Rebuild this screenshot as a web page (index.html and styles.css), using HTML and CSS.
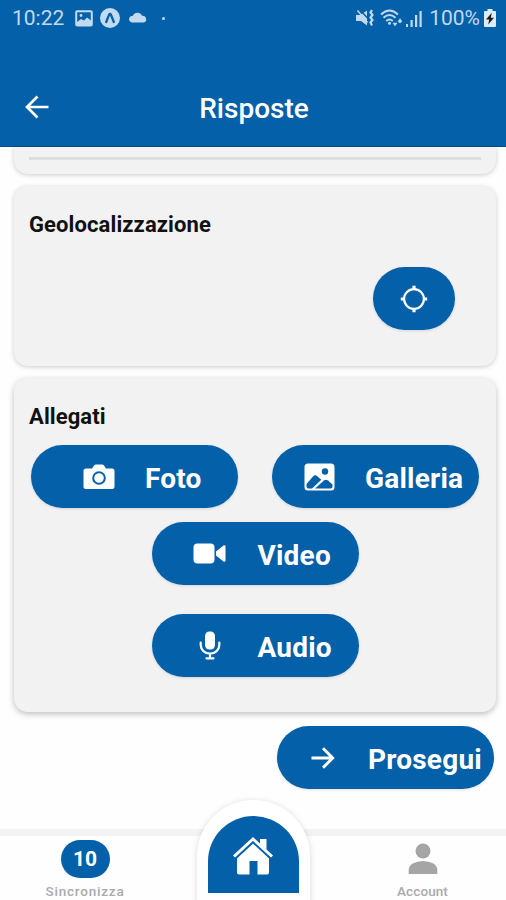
FILE: index.html
```html
<!DOCTYPE html>
<html lang="it">
<head>
  <meta charset="UTF-8">
  <title>Risposte</title>
  <link rel="stylesheet" href="styles.css">
</head>
<body>
  <div class="screen">
    <header class="header">
      <div class="status">
        <span class="clock">10:22</span>
        <svg class="st-photo" width="18" height="17" viewBox="0 0 18 17">
          <rect x="1.2" y="1.2" width="15.6" height="14.4" rx="1" fill="none" stroke="currentColor" stroke-width="2"/>
          <path d="M2 12l4-3 3 1.500 3-3 4 3v5H2z" fill="currentColor"/>
          <circle cx="6" cy="5.5" r="1.4" fill="currentColor"/>
        </svg>
        <svg class="st-app" width="20" height="20" viewBox="0 0 20 20">
          <circle cx="10" cy="10" r="10" fill="currentColor"/>
          <path d="M6.2 14L9 6.8q1-1.6 2 0L13.8 14" fill="none" stroke="#0460a8" stroke-width="2.3" stroke-linecap="round" stroke-linejoin="round"/>
        </svg>
        <svg class="st-cloud" width="19" height="12" viewBox="0 0 19 12">
          <path d="M3.5 11.5a3.3 3.3 0 0 1 0-6.4h1.2A5 5 0 0 1 14 4.8a3.4 3.4 0 0 1 1.5 6.7z" fill="currentColor"/>
        </svg>
        <span class="dot"></span>
        <div class="status-right">
          <svg width="18" height="18" viewBox="0 0 18 18">
            <path d="M0 6h4.500L11 1.500v15L5 12H0z" fill="currentColor"/>
            <path d="M4 1l8 8.500" stroke="#0460a8" stroke-width="1.500"/>
            <path d="M1.500 1.500l10 12" stroke="currentColor" stroke-width="1.500"/>
            <path d="M16 1l-1.500 2.500 2 2.500-2 2.500 2 2.500-2 2.500 1.500 3" fill="none" stroke="currentColor" stroke-width="2.200"/>
          </svg>
          <svg class="st-wifi" width="23" height="18" viewBox="0 0 23 18">
            <path d="M1 5.500q8.500-8 17 0M3.500 8.800q6-5.500 12 0M6.200 12q3.300-3 6.600 0" fill="none" stroke="currentColor" stroke-width="1.900"/>
            <circle cx="9.500" cy="14.200" r="1.500" fill="currentColor"/>
            <path d="M13 14h4l-2 3zM18 12.500l2-3 2 3-2 1.500z" fill="currentColor" stroke="currentColor" stroke-width=".5"/>
          </svg>
          <svg class="st-signal" width="17" height="17" viewBox="0 0 17 17" fill="currentColor">
            <rect x="0" y="14" width="2" height="3"/>
            <rect x="4.500" y="10" width="2.200" height="7"/>
            <rect x="9" y="5" width="2.200" height="12"/>
            <rect x="13.500" y="1" width="2.200" height="16"/>
          </svg>
          <span class="percent">100%</span>
          <svg class="st-battery" width="12" height="18" viewBox="0 0 12 18">
            <path d="M3.500 0h5v2H11q1 0 1 1v14q0 1-1 1H1q-1 0-1-1V3q0-1 1-1h2.500z" fill="#dcebf6"/>
            <path d="M7.800 3.800L2 10.600h3.200L4.200 15.500 10 8.800H6.800z" fill="#1b1b1b"/>
          </svg>
        </div>
      </div>
      <div class="title-bar">
        <svg class="back" width="24" height="24" viewBox="0 0 24 24" fill="none" stroke="#fff" stroke-width="2.700">
          <path d="M23.500 12H2.500M12.500 1.500L2 12l10.500 10.500"/>
        </svg>
        <h1>Risposte</h1>
      </div>
    </header>

    <main class="content">
      <section class="card card-previous">
        <div class="line"></div>
      </section>

      <section class="card card-geo">
        <h2>Geolocalizzazione</h2>
        <button class="btn btn-locate">
          <svg width="28" height="28" viewBox="0 0 28 28" fill="none" stroke="#fff">
            <circle cx="14" cy="14" r="9.900" stroke-width="2.200"/>
            <path d="M14 .8v4M14 23.200v4M.8 14h4M23.200 14h4" stroke-width="3.200"/>
          </svg>
        </button>
      </section>

      <section class="card card-files">
        <h2>Allegati</h2>
        <div class="buttons">
          <button class="btn btn-foto">
            <svg width="32" height="26" viewBox="0 0 32 26">
              <path d="M3 4.500h6L11 1.500q.8-1 2-1h6q1.200 0 2 1l2 3h6q2.500 0 2.500 2.500v15.500q0 2.500-2.500 2.500H3Q.5 25 .5 22.500V7Q.5 4.500 3 4.500z" fill="#fff"/>
              <circle cx="16" cy="14" r="5.800" fill="none" stroke="#0460a8" stroke-width="2"/>
            </svg>
            <span>Foto</span>
          </button>
          <button class="btn btn-galleria">
            <svg width="31" height="28" viewBox="0 0 31 28">
              <rect x=".5" y=".5" width="30" height="27" rx="3.500" fill="#fff"/>
              <g fill="#0460a8">
                <circle cx="21" cy="8.500" r="3.200"/>
                <path d="M2.500 21l6.500-7.500q2-2.300 4.300-.3l4 3.600L8 25.500H4.500q-2 0-2-2z"/>
                <path d="M11 25.500l9-8q2-1.600 4 0l4.500 4v2q0 2-2 2z"/>
              </g>
            </svg>
            <span>Galleria</span>
          </button>
          <button class="btn btn-video">
            <svg width="33" height="21" viewBox="0 0 33 21" fill="#fff">
              <rect x=".5" y=".5" width="21" height="20" rx="4"/>
              <path d="M23 8.500l7.500-6q2-1 2 1v14q0 2-2 1l-7.500-6z"/>
            </svg>
            <span>Video</span>
          </button>
          <button class="btn btn-audio">
            <svg width="22" height="29" viewBox="0 0 22 29">
              <rect x="6" y=".5" width="10" height="18" rx="4.500" fill="#fff"/>
              <path d="M1.700 11.500v2.500a9.300 8.700 0 0 0 18.600 0v-2.500M11 22.700V27M7.500 27.300h7" fill="none" stroke="#fff" stroke-width="2.200" stroke-linecap="round"/>
            </svg>
            <span>Audio</span>
          </button>
        </div>
      </section>

      <button class="btn btn-next">
        <svg width="24" height="22" viewBox="0 0 24 22" fill="none" stroke="#fff" stroke-width="2.900">
          <path d="M.5 11h21.500M12 1.300l9.700 9.700-9.700 9.700"/>
        </svg>
        <span>Prosegui</span>
      </button>
    </main>

    <nav class="tabs">
      <div class="tab">
        <span class="badge">10</span>
        <span class="label">Sincronizza</span>
      </div>
      <div class="tab-home">
        <div class="home">
          <svg width="42" height="40" viewBox="0 0 42 40">
            <path d="M28 3h6.500v14l-6.500-6z" fill="#fff"/>
            <path d="M5 19L21 5.500 37 19v17.500q0 2-2 2h-9.500V25h-8v13.500H7q-2 0-2-2z" fill="#fff"/>
            <path d="M2 22L21 4.500l19 17.500" fill="none" stroke="#0460a8" stroke-width="4.500"/>
            <path d="M2 20.500L21 3l19 17.500" fill="none" stroke="#fff" stroke-width="3"/>
          </svg>
        </div>
      </div>
      <div class="tab tab-account">
        <svg class="user" width="30" height="32" viewBox="0 0 30 32" fill="#a5a5a5">
          <circle cx="15" cy="8" r="7.500"/>
          <path d="M.7 31v-4q0-4 4-6.500Q9 18 15 18t10.300 2.500q4 2.500 4 6.500v4z"/>
        </svg>
        <span class="label label-account">Account</span>
      </div>
    </nav>
  </div>
</body>
</html>
```
FILE: styles.css
```css
* {
  box-sizing: border-box;
}

body {
  margin: 0;
  font-family: Roboto, Arial, sans-serif;
  background: #fefefe;
}

.screen {
  display: flex;
  flex-direction: column;
  height: 900px;
  overflow: hidden;
}

.header {
  flex: none;
  height: 147px;
  background: #0460a8;
  border-bottom: 1px solid #07508e;
}

.status {
  display: flex;
  align-items: center;
  height: 36px;
  padding: 0 10px 0 12px;
  color: #c1daee;
  font-size: 21px;
}

.clock {
  width: 63px;
}

.st-app {
  margin-left: 7px;
}

.st-cloud {
  margin-left: 8px;
  margin-bottom: 3px;
}

.dot {
  width: 3px;
  height: 3px;
  margin-left: 15px;
  border-radius: 50%;
  background: #c1daee;
}

.status-right {
  display: flex;
  align-items: center;
  margin-left: auto;
}

.st-wifi {
  margin-left: 6px;
}

.st-signal {
  margin-left: 3px;
}

.percent {
  margin-left: 6px;
}

.st-battery {
  margin-left: 4px;
}

.title-bar {
  display: grid;
  grid-template-columns: 24px 1fr 24px;
  align-items: center;
  height: 72px;
  margin-top: 35px;
  padding: 0 23px 0 25px;
}

h1 {
  margin: 4px 0 0;
  color: white;
  font-size: 28px;
  font-weight: 500;
  line-height: 32px;
  text-align: center;
}

.content {
  display: flex;
  flex-direction: column;
  flex: 1;
  padding: 0 10px 0 14px;
}

.card {
  width: 482px;
  padding: 25px 15px;
  border-radius: 14px;
  background: #f2f2f2;
  box-shadow: 0 1px 5px rgba(0, 0, 0, 0.2);
}

.card-previous {
  height: 27px;
  padding-top: 10px;
  padding-bottom: 0;
  border-radius: 0 0 14px 14px;
}

.line {
  height: 3px;
  background: #dedede;
}

.card-geo {
  display: flex;
  flex-direction: column;
  height: 180px;
  margin-top: 12px;
}

.card-files {
  height: 334px;
  margin-top: 12px;
  box-shadow: 0 2px 6px rgba(0, 0, 0, 0.26);
}

h2 {
  margin: 0;
  color: #111;
  font-size: 22px;
  font-weight: bold;
  line-height: 27px;
  letter-spacing: 0.1px;
}

.btn {
  display: flex;
  align-items: center;
  height: 63px;
  padding: 0;
  border: none;
  border-radius: 32px;
  background: #0460a8;
  color: white;
  font-family: inherit;
  font-size: 28px;
  font-weight: bold;
  line-height: 34px;
  letter-spacing: 0.2px;
  box-shadow: 0 1px 3px rgba(0, 0, 0, 0.12);
}

.btn span {
  margin-top: 4px;
}

.btn-locate {
  justify-content: center;
  align-self: flex-end;
  width: 82px;
  margin: 29px 26px 0 0;
}

.buttons {
  display: grid;
  grid-template-columns: 207px 207px;
  column-gap: 34px;
  padding: 15px 2px 0;
}

.btn-foto {
  padding-left: 52px;
  gap: 30px;
}

.btn-galleria {
  padding-left: 32px;
  gap: 30px;
}

.btn-video,
.btn-audio {
  grid-column: 1 / 3;
  justify-self: center;
  width: 207px;
}

.btn-video {
  margin-top: 14px;
  padding-left: 41px;
  gap: 32px;
}

.btn-audio {
  margin-top: 29px;
  padding-left: 47px;
  gap: 37px;
}

.btn-next {
  align-self: flex-end;
  width: 217px;
  margin: 14px 2px 0 0;
  padding-left: 34px;
  gap: 33px;
}

.tabs {
  display: grid;
  grid-template-columns: 170px 166px 170px;
  flex: none;
  height: 71px;
  border-top: 7px solid #f3f3f3;
}

.tab {
  display: flex;
  flex-direction: column;
  align-items: center;
}

.tab-account {
  padding-left: 3px;
}

.badge {
  width: 49px;
  height: 38px;
  margin-top: 4px;
  border-radius: 19px;
  background: #0460a8;
  color: white;
  font-size: 21px;
  font-weight: bold;
  line-height: 39px;
  text-align: center;
}

.label {
  margin-top: 5px;
  color: #aaa;
  font-size: 13.5px;
  font-weight: 500;
  line-height: 16px;
  letter-spacing: 0.8px;
}

.user {
  margin-top: 7px;
}

.label-account {
  margin-top: 8px;
  letter-spacing: 0.1px;
}

/* the home tab rises above the bar */
.tab-home {
  justify-self: center;
  width: 113px;
  height: 112px;
  margin-top: -36px;
  padding: 16px 11px 0;
  border-radius: 56px 56px 0 0;
  background: white;
  box-shadow: 0 1px 6px rgba(0, 0, 0, 0.15);
}

.home {
  display: flex;
  justify-content: center;
  height: 77px;
  padding-top: 20px;
  border-radius: 46px 46px 0 0;
  background: #0460a8;
}
```
